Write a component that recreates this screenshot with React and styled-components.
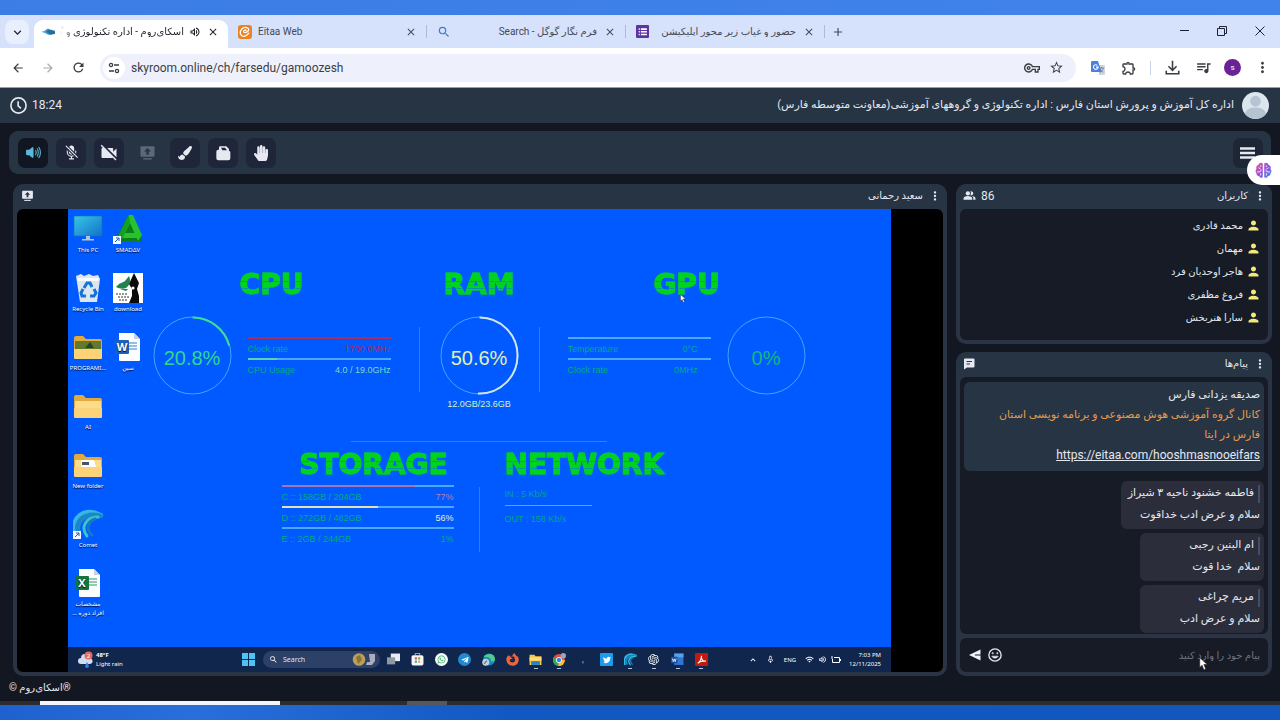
import styled, { createGlobalStyle, css } from "styled-components";
import {
  MdArrowBack,
  MdArrowForward,
  MdRefresh,
  MdClose,
  MdAdd,
  MdExpandMore,
  MdOutlineVpnKey,
  MdStarBorder,
  MdOutlineExtension,
  MdQueueMusic,
  MdMoreVert,
  MdVideocamOff,
  MdPeopleAlt,
  MdPerson,
  MdSearch,
  MdOutlineVolumeUp,
  MdWifi,
  MdMicNone,
  MdExpandLess,
} from "react-icons/md";
import { IoVolumeHigh, IoMicOff } from "react-icons/io5";
import {
  FaPaintBrush,
  FaHandPaper,
  FaWhatsapp,
  FaTwitter,
  FaTelegramPlane,
  FaFirefoxBrowser,
} from "react-icons/fa";
import { RiOpenaiFill } from "react-icons/ri";

const COLOR = {
  page: "#131722",
  panel: "#273444",
  edge: "#2b3444",
  inner: "#171b26",
  bubble: "#2c2d3b",
  text: "#e3e8f0",
  orange: "#e69a4c",
  yellow: "#f2ea78",
  wallpaper: "#005aff",
  green: "#00d21e",
  line: "#4fa8ff",
};

const FONT = {
  main: `Roboto, "DejaVu Sans", sans-serif`,
  desktop: `"Noto Sans", "DejaVu Sans", sans-serif`,
  widget: `"Liberation Sans", Arial, sans-serif`,
};

const GlobalStyle = createGlobalStyle`
  * {
    box-sizing: border-box;
  }

  body {
    margin: 0;
    background: ${COLOR.page};
    font-family: ${FONT.main};
    color: ${COLOR.text};
  }

  button {
    border: 0;
    padding: 0;
    background: none;
    color: inherit;
    font: inherit;
  }

  svg {
    display: block;
    flex: none;
  }
`;

const Page = styled.div`
  position: relative;
  display: flex;
  flex-direction: column;
  min-height: 100vh;
`;

const TopStrip = styled.div`
  height: 15px;
  background: linear-gradient(90deg, #3b7de4, #4083ea);
`;

const BottomStrip = styled.div`
  height: 15px;
  background: linear-gradient(90deg, #1f62cf, #2a6edb 15%, #1357c2 40%, #1256be);
`;

/* browser window */

const TabBar = styled.div`
  display: flex;
  align-items: flex-end;
  height: 33px;
  padding-left: 5px;
  background: #d6e1fb;
  color: #454a57;
`;

const TabListButton = styled.button`
  display: grid;
  place-items: center;
  width: 24px;
  height: 24px;
  margin: 0 5px 4px 0;
  border-radius: 8px;
  background: #e9effd;
  color: #1f2329;
`;

const Tab = styled.div`
  display: flex;
  align-items: center;
  gap: 6px;
  width: 198px;
  height: 28px;
  padding: 0 8px 5px 10px;
  border-radius: 9px 9px 0 0;
  font-size: 10px;

  ${(props) =>
    props.$active &&
    css`
      width: 194px;
      background: #fff;
      color: #1f2329;
      padding: 0 8px 5px 7px;
      gap: 5px;
    `}
`;

const TabTitle = styled.span`
  flex: 1;
  min-width: 0;
  overflow: hidden;
  white-space: nowrap;
  ${(props) =>
    props.$fade && "mask-image: linear-gradient(90deg, transparent, #000 14px);"}
`;

const TabDivider = styled.span`
  width: 1px;
  height: 13px;
  margin-bottom: 5px;
  background: #a9bbe4;
`;

const IconButton = styled.button`
  display: grid;
  place-items: center;
  flex: none;
  width: ${(props) => props.$size ?? 20}px;
  height: ${(props) => props.$size ?? 20}px;
`;

const NewTabButton = styled(IconButton)`
  margin: 0 0 6px 3px;
`;

const WindowButtons = styled.div`
  display: flex;
  gap: 18px;
  margin: 0 10px 7px auto;
  color: #1c2233;
`;

const AddressRow = styled.div`
  display: flex;
  align-items: center;
  height: 40px;
  padding: 0 8px;
  border-bottom: 1px solid #9aa0a8;
  background: #fff;
  color: #3a3d42;
`;

const NavButtons = styled.div`
  display: flex;
  gap: 10px;
  margin-right: 12px;
`;

const AddressBox = styled.label`
  display: flex;
  align-items: center;
  flex: 1;
  gap: 6px;
  height: 28px;
  padding: 0 10px 0 3px;
  border-radius: 14px;
  background: #eef1fb;
`;

const SiteInfo = styled.span`
  display: grid;
  place-items: center;
  width: 22px;
  height: 22px;
  border-radius: 50%;
  background: #fff;
`;

const AddressInput = styled.input`
  flex: 1;
  min-width: 0;
  border: 0;
  padding: 0;
  background: none;
  color: #3b3e45;
  font: 12px ${FONT.main};
`;

const Extensions = styled.div`
  display: flex;
  align-items: center;
  gap: 11px;
  margin-left: 12px;
`;

const ExtensionDivider = styled.span`
  width: 1px;
  height: 14px;
  background: #c9d3ec;
`;

const Profile = styled.button`
  width: 17px;
  height: 17px;
  border-radius: 50%;
  background: #6b2394;
  color: #fff;
  font-size: 8px;
`;

/* room */

const Header = styled.header`
  display: flex;
  align-items: center;
  justify-content: space-between;
  height: 35px;
  padding: 0 11px 0 10px;
  background: ${COLOR.panel};
`;

const Inline = styled.div`
  display: flex;
  align-items: center;
  gap: ${(props) => props.$gap ?? 6}px;
`;

const Clock = styled.time`
  padding-bottom: 2px;
  font-size: 12px;
  line-height: 16px;
`;

const RoomTitle = styled.h1`
  margin: 0;
  padding-bottom: 2px;
  font-size: 11px;
  font-weight: 400;
`;

const Toolbar = styled.div`
  display: flex;
  align-items: center;
  gap: 8px;
  height: 43px;
  margin: 8px 9px 10px;
  padding: 0 8px 0 9px;
  border-radius: 9px;
  background: ${COLOR.panel};
`;

const ToolButton = styled.button`
  display: grid;
  place-items: center;
  width: 30px;
  height: 30px;
  border-radius: 7px;
  background: ${(props) => (props.$active ? "#101722" : "#20263a")};
  color: ${(props) => (props.$active ? "#5cb8d8" : "#e6e9f2")};

  &:disabled {
    background: none;
    color: #5c6877;
  }

  &:last-child {
    margin-left: auto;
    background: #1e2635;
  }
`;

const Room = styled.main`
  display: flex;
  flex: 1;
  gap: 9px;
  padding: 0 8px 0 13px;
`;

const Panel = styled.section`
  display: flex;
  flex-direction: column;
  flex: ${(props) => (props.$grow ? "1" : "none")};
  min-width: 0;
  padding: 0 4px 4px;
  border-radius: 10px;
  background: linear-gradient(${COLOR.panel} 25px, ${COLOR.edge} 40px);
`;

const PanelHeader = styled.div`
  display: flex;
  align-items: center;
  justify-content: space-between;
  height: 25px;
  padding: 0 0 2px 3px;
`;

const PanelTitle = styled.h2`
  margin: 0;
  padding-bottom: 1px;
  font-size: 10px;
  font-weight: 400;
`;

const Count = styled.span`
  font-size: 12px;
`;

const Sidebar = styled.aside`
  display: flex;
  flex-direction: column;
  gap: 8px;
  width: 316px;
`;

const UserList = styled.ul`
  min-height: 131px;
  margin: 0;
  padding: 5px 7px;
  border-radius: 6px;
  background: ${COLOR.inner};
  list-style: none;
`;

const User = styled.li`
  display: flex;
  align-items: center;
  gap: 3px;
  height: 23px;
  font-size: 10px;
  color: ${COLOR.text};

  & svg {
    color: ${COLOR.yellow};
  }
`;

const MessageList = styled.div`
  display: flex;
  flex-direction: column;
  flex: 1;
  gap: 4px;
  padding: 5px 4px 1px;
  border-radius: 6px;
  background: ${COLOR.inner};
`;

const Announcement = styled.article`
  margin-bottom: 6px;
  padding: 3px 4px 5px 24px;
  border-radius: 6px;
  background: ${COLOR.panel};
  font-size: 11px;
  line-height: 20px;

  & p {
    margin: 0;
  }

  & a {
    color: ${COLOR.text};
    font-size: 12px;
  }
`;

const OrangeText = styled.p`
  color: ${COLOR.orange};
`;

const Bubble = styled.article`
  align-self: flex-start;
  min-width: 124px;
  height: 48px;
  padding: 4px 4px 2px 7px;
  border-radius: 6px;
  background: ${COLOR.bubble};
  font-size: 11px;
  white-space: pre;
`;

const Sender = styled.div`
  height: 18px;
  padding-right: 4px;
  border-right: 2px solid #434d6c;
  line-height: 16px;
`;

const BubbleText = styled.div`
  line-height: 24px;
`;

const Composer = styled.form`
  position: relative;
  display: flex;
  align-items: center;
  gap: 6px;
  height: 34px;
  margin-top: 4px;
  padding: 0 8px;
  border-radius: 6px;
  background: ${COLOR.inner};
`;

const ComposerInput = styled.input`
  flex: 1;
  min-width: 0;
  border: 0;
  padding: 0;
  background: none;
  color: ${COLOR.text};
  font: 10px ${FONT.main};

  &::placeholder {
    color: #70747f;
    opacity: 1;
  }
`;

const Footer = styled.footer`
  height: 25px;
  padding: 4px 9px 0;
  font-size: 10px;
  line-height: 16px;
`;

const HostTaskbar = styled.div`
  display: grid;
  grid-template-columns: 40px 240px 127px 40px 1fr;
  height: 4px;
  background: #2e2c2c;
`;

const HostWindow = styled.span`
  grid-column: ${(props) => props.$column};
  background: ${(props) => props.$color};
`;

const Assistant = styled.button`
  position: absolute;
  top: 155px;
  right: 0;
  display: grid;
  place-items: center;
  width: 33px;
  height: 30px;
  border-radius: 15px 0 0 15px;
  background: #fff;
`;

const Pointer = styled.svg`
  position: absolute;
  ${(props) => props.$place}
`;

/* shared desktop */

const Stage = styled.div`
  display: flex;
  flex: 1;
  padding: 0 52px 0 51px;
  border-radius: 6px;
  background: #000;
`;

const Desktop = styled.div`
  display: flex;
  flex-direction: column;
  flex: 1;
  min-width: 0;
  background: ${COLOR.wallpaper};
`;

const DesktopBody = styled.div`
  display: flex;
  flex: 1;
  gap: 4px;
`;

const Shortcuts = styled.div`
  display: grid;
  grid-template-rows: repeat(7, 59px);
  grid-template-columns: 40px 40px;
  grid-auto-flow: column;
  padding-top: 5px;
`;

const Shortcut = styled.div`
  display: flex;
  flex-direction: column;
  align-items: center;
  gap: 2px;
  color: #fff;
  font: 6px/9px ${FONT.desktop};
  text-align: center;
  text-shadow: 0 1px 1px #001;
  white-space: pre;
`;

const Widgets = styled.div`
  display: flex;
  flex-direction: column;
  align-items: center;
  width: 654px;
  padding-top: 60px;
  font-family: ${FONT.widget};
`;

const WidgetRow = styled.div`
  display: flex;
  gap: ${(props) => props.$gap}px;
`;

const Widget = styled.section`
  position: relative;
  display: flex;
  flex-direction: column;
  align-items: ${(props) => props.$align ?? "center"};
  width: ${(props) => props.$width}px;
`;

const WidgetTitle = styled.h3`
  margin: 0;
  padding-left: ${(props) => props.$indent ?? 0}px;
  font: bold 28px/32px "DejaVu Sans", sans-serif;
  color: transparent;
  -webkit-text-stroke: 1px rgba(0, 210, 30, 0.7);
  background: linear-gradient(
    ${COLOR.green} 12px,
    #0594a0 12px 13px,
    ${COLOR.green} 13px 19px,
    #0594a0 19px 20px,
    ${COLOR.green} 20px
  );
  background-clip: text;
`;

const GaugeRow = styled.div`
  display: flex;
  align-items: center;
  gap: 16px;
  margin-top: 15px;
`;

const GaugeBox = styled.div`
  position: relative;
  display: grid;
  place-items: center;
  width: 79px;
  height: 79px;
  color: ${(props) => props.$color};
  font-size: 20px;
  line-height: 24px;

  & svg {
    position: absolute;
    inset: 0;
  }

  & span {
    padding-top: 5px;
  }
`;

const GaugeNote = styled.div`
  margin-top: 3px;
  color: #d9f0c0;
  font-size: 9px;
  line-height: 12px;
`;

const Stats = styled.div`
  display: flex;
  flex-direction: column;
  width: ${(props) => props.$width}px;
  padding-top: 4px;
`;

const Stat = styled.div`
  display: flex;
  justify-content: space-between;
  height: 21px;
  padding: 5px ${(props) => props.$inset ?? 0}px 0 0;
  border-top: 2px solid;
  border-image: linear-gradient(
      90deg,
      ${(props) => props.$bar ?? COLOR.line} ${(props) => props.$fill ?? 100}%,
      ${COLOR.line} 0
    )
    1;
  color: #00ab83;
  font-size: 9px;
  line-height: 11px;
`;

const StatValue = styled.span`
  color: ${(props) => props.$color ?? "inherit"};
`;

const Divider = styled.span`
  width: 1px;
  height: 65px;
  margin-top: ${(props) => props.$top}px;
  background: #2e7dff;
`;

const HorizontalDivider = styled.span`
  width: 256px;
  height: 1px;
  margin: 31px 0 7px;
  background: #2e7dff;
`;

const NetLine = styled.div`
  width: 87px;
  height: 24px;
  padding-top: 8px;
  border-top: ${(props) => (props.$rule ? `1px solid ${COLOR.line}` : 0)};
  color: #00a58d;
  font-size: 9px;
  line-height: 11px;
`;

const Taskbar = styled.div`
  display: flex;
  align-items: center;
  height: 25px;
  padding: 0 10px;
  background: #10264c;
  color: #fff;
  font: 6px/8px ${FONT.desktop};
`;

const Weather = styled.div`
  display: flex;
  align-items: center;
  gap: 3px;
  width: 164px;

  & div {
    line-height: 9px;
  }
`;

const SearchBox = styled.label`
  display: flex;
  align-items: center;
  gap: 5px;
  width: 117px;
  height: 17px;
  margin-left: 8px;
  padding: 0 4px 0 6px;
  border-radius: 9px;
  background: #2c4068;
`;

const SearchInput = styled.input`
  flex: 1;
  min-width: 0;
  border: 0;
  padding: 0;
  background: none;
  font: 7px ${FONT.desktop};

  &::placeholder {
    color: #dfe6f4;
    opacity: 1;
  }
`;

const TaskApps = styled.div`
  display: flex;
  width: 331px;
  margin-left: 2px;
`;

const TaskApp = styled.span`
  display: flex;
  flex: 1;
  flex-direction: column;
  align-items: center;
  gap: 2px;
  padding-top: 3px;

  &::after {
    content: "";
    width: 4px;
    height: 1px;
    background: ${(props) => (props.$open ? "#b8c6de" : "transparent")};
  }
`;

const Disc = styled.span`
  display: grid;
  place-items: center;
  width: 13px;
  height: 13px;
  border-radius: ${(props) => props.$radius ?? "50%"};
  background: ${(props) => props.$color};
  color: ${(props) => props.$ink ?? "#fff"};
`;

const Tray = styled.div`
  display: flex;
  align-items: center;
  gap: 4px;
  margin-left: auto;
  text-align: right;

  & time {
    margin-left: 4px;
    line-height: 9px;
  }
`;

const TrayGroup = styled.span`
  display: flex;
  align-items: center;
  gap: 8px;
  margin-right: 5px;
`;

/* drawings */

const ShareIcon = ({ size = 18, hole = COLOR.panel }) => (
  <svg width={size} height={size} viewBox="0 0 24 24" fill="currentColor">
    <path d="M3.500 3h17A1.500 1.500 0 0 1 22 4.500v12a1.500 1.500 0 0 1-1.500 1.500h-17A1.500 1.500 0 0 1 2 16.500v-12A1.500 1.500 0 0 1 3.500 3z" />
    <path d="M12 5.500l5 5h-3.300V15h-3.400v-4.500H7z" fill={hole} />
    <path d="M6 20h12v2H6z" />
  </svg>
);

const FilesIcon = () => (
  <svg width="16" height="16" viewBox="0 0 24 24" fill="currentColor">
    <path d="M2 10a3 3 0 0 1 3-3h1V4a2 2 0 0 1 2-2h9l4 4v3a2 2 0 0 1 2 2v9a3 3 0 0 1-3 3H5a3 3 0 0 1-3-3z" />
    <path d="M9 4h6l3 4h-7z" fill="#20263a" />
  </svg>
);

const MenuIcon = () => (
  <svg width="16" height="14" viewBox="0 0 16 14" stroke="currentColor" strokeWidth="2.500">
    <path d="M0 2.500h15M0 7h15M0 11.500h15" />
  </svg>
);

const ClockIcon = () => (
  <svg
    width="17"
    height="17"
    viewBox="0 0 24 24"
    fill="none"
    stroke="currentColor"
    strokeWidth="2.300"
  >
    <circle cx="12" cy="12" r="10.700" />
    <path d="M11.500 6v6.500l4 3.500" />
  </svg>
);

const SkyroomIcon = () => (
  <svg width="14" height="12" viewBox="0 0 24 20">
    <path d="M0 10c5-1 7-2 10-5 3-1 5-1 6 1 3 0 6 1 8 2v5c-4-1-6 3-10 2-3 0-5-4-14-5z" fill="#4a9ed2" />
    <path d="M9 9c4-4 8-3 15 0v4c-5 2-11 1-15-4z" fill="#2a6b98" />
  </svg>
);

const EitaaIcon = () => (
  <svg width="14" height="14" viewBox="0 0 24 24">
    <rect width="24" height="24" rx="5" fill="#e98324" />
    <path
      d="M4 15C3 8 9 3 15 4.500c5 1.500 4 6-1 8-4 1.500-6-1-3-3.500 1.500-1 3-.5 2.500.5M4.500 16c2 5 9 5 14-2"
      fill="none"
      stroke="#fff"
      strokeWidth="2.200"
      strokeLinecap="round"
    />
  </svg>
);

const FormsIcon = () => (
  <svg width="13" height="13" viewBox="0 0 24 24">
    <rect width="24" height="24" rx="2" fill="#5b35a0" />
    <path d="M5 6h2v3H5zM9 6h11v3H9zM5 11h2v3H5zM9 11h11v3H9zM5 16h2v3H5zM9 16h11v3H9z" fill="#fff" />
  </svg>
);

const TuneIcon = () => (
  <svg width="12" height="12" viewBox="0 0 24 24" fill="none" stroke="#3a3d42" strokeWidth="2.600">
    <circle cx="6" cy="6" r="3.200" />
    <circle cx="18" cy="18" r="3.200" />
    <path d="M12 6h10M2 18h10" />
  </svg>
);

const DownloadIcon = () => (
  <svg width="15" height="15" viewBox="0 0 24 24" fill="none" stroke="currentColor" strokeWidth="2.500">
    <path d="M12 1v15M5.500 10l6.500 6.500 6.500-6.500M2 17v5h20v-5" />
  </svg>
);

const TranslateIcon = () => (
  <svg width="14" height="14" viewBox="0 0 24 24">
    <path d="M11 7h11a2 2 0 0 1 2 2v13a2 2 0 0 1-2 2H14z" fill="#cfd5de" />
    <path d="M14 12h8M18 10v2m3 0c-1 4-3 6-6 8m1-6c1 3 3 4 5 5" stroke="#6c7f9b" strokeWidth="1.500" fill="none" />
    <path d="M2 0h10l6 19H2a2 2 0 0 1-2-2V2a2 2 0 0 1 2-2z" fill="#4c80dc" />
    <path d="M11 7.500a4 4 0 1 0 1.200 3H8.500" fill="none" stroke="#fff" strokeWidth="1.800" />
  </svg>
);

const Avatar = () => (
  <svg width="27" height="27" viewBox="0 0 28 28">
    <circle cx="14" cy="14" r="14" fill="#dbe6ee" />
    <circle cx="14" cy="9.500" r="5.500" fill="#b5c4d0" />
    <path d="M3 22.500C5 17 9 16 14 16s9 1 11 6.500A14 14 0 0 1 3 22.500z" fill="#b5c4d0" />
  </svg>
);

const BrainIcon = () => (
  <svg width="17" height="17" viewBox="0 0 24 24">
    <defs>
      <linearGradient id="brain" x1="0" x2="1" y1="0" y2="1">
        <stop offset="0" stopColor="#f0568f" />
        <stop offset=".5" stopColor="#9a52dc" />
        <stop offset="1" stopColor="#3b8ff0" />
      </linearGradient>
    </defs>
    <path
      d="M11 2C8 0 5 2 5 4 2 5 1 8 2 10c-2 2-1 5 0 6 0 3 2 4 4 4 1 3 4 3 5 1zM13 2c3-2 6 0 6 2 3 1 4 4 3 6 2 2 1 5 0 6 0 3-2 4-4 4-1 3-4 3-5 1z"
      fill="url(#brain)"
    />
    <path
      d="M5 8l3 2M3 14h4l2-3M8 5v2M8 16v3M19 8l-3 2M21 14h-4l-2-3M16 5v2M16 16v3"
      stroke="#fff"
      strokeWidth="1.200"
      fill="none"
    />
  </svg>
);

const ChatIcon = () => (
  <svg width="12" height="12" viewBox="0 0 24 24">
    <path d="M4 1h17a2 2 0 0 1 2 2v14a2 2 0 0 1-2 2H8l-6 4V3a2 2 0 0 1 2-2z" fill="#e6e9f2" />
    <path d="M7 7h11M7 12h7" stroke={COLOR.panel} strokeWidth="2" />
  </svg>
);

const SendIcon = () => (
  <svg width="12" height="12" viewBox="0 0 24 24">
    <path d="M0 12L23 1v22z" fill="#eef0f6" />
    <path d="M12 12h12" stroke={COLOR.inner} strokeWidth="2" />
  </svg>
);

const SmileIcon = () => (
  <svg width="14" height="14" viewBox="0 0 24 24" fill="none" stroke="#e6e9f2" strokeWidth="2.300">
    <circle cx="12" cy="12" r="10.500" />
    <path d="M6.500 14c2 4.500 9 4.500 11 0z" fill="#e6e9f2" strokeWidth="1" />
    <circle cx="8" cy="9" r=".6" />
    <circle cx="16" cy="9" r=".6" />
  </svg>
);

const PointerArrow = ({ place, size }) => (
  <Pointer $place={place} width={size} height={size * 1.5} viewBox="0 0 12 18">
    <path d="M1 1v13l3-3 2.500 6 2.500-1-2.500-6H11z" fill="#fff" stroke="#222" strokeWidth=".8" />
  </Pointer>
);

const ArrowBadge = () => (
  <g>
    <rect x="0" y="22" width="8" height="8" fill="#f4f8ff" />
    <path d="M2 28l4-4M3 24h3v3" fill="none" stroke="#1b62b8" strokeWidth="1" />
  </g>
);

const Art = ({ children }) => (
  <svg width="30" height="30" viewBox="0 0 30 30">
    {children}
  </svg>
);

const Folder = ({ children }) => (
  <Art>
    <path d="M1 6a2 2 0 0 1 2-2h7l3 3h14a2 2 0 0 1 2 2v15H1z" fill="#e0aa3c" />
    <path d="M2 10h26v14H2z" fill="#fbdc8c" />
    {children}
    <path d="M1 17h28v9a1 1 0 0 1-1 1H2a1 1 0 0 1-1-1z" fill="#fcd477" />
  </Art>
);

const PcArt = () => (
  <Art>
    <defs>
      <linearGradient id="screen" x1="0" x2="1" y1="0" y2="1">
        <stop offset="0" stopColor="#37c6e8" />
        <stop offset="1" stopColor="#1272c9" />
      </linearGradient>
    </defs>
    <rect x="1" y="2" width="28" height="20" rx="1" fill="url(#screen)" stroke="#1c6ea8" strokeWidth=".6" />
    <path d="M13 22h4v3h4v1.500H9V25h4z" fill="#b9c6d3" />
  </Art>
);

const SmadavArt = () => (
  <Art>
    <path d="M15 1L2 27h27L19 1z" fill="#0c7d1b" />
    <path d="M16 1h4l9 20-4 6-8-18-5 10h10l2 5H5z" fill="#25c32e" />
    <path d="M16 1L4 24l5 1 8-16z" fill="#159f23" />
    <ArrowBadge />
  </Art>
);

const RecycleArt = () => (
  <Art>
    <path d="M3 3l5-2 3 2 5-2 4 2 5-1 2 4-3 23H7z" fill="#dce6f2" />
    <path d="M4 5h22l-1 3H5z" fill="#f7faff" />
    <path
      d="M11 15l3-5h3l2 4M21 16l2 4-2 3h-4M13 23H9l-1-3 2-4"
      fill="none"
      stroke="#1673d4"
      strokeWidth="3"
    />
  </Art>
);

const DownloadArt = () => (
  <Art>
    <rect width="30" height="30" fill="#fff" />
    <path d="M3 14c3-4 6-4 9-6l4-5c2 5 1 9-3 12-3 1-6 1-10-1z" fill="#1f8350" />
    <path d="M7 16h8l-2 2z" fill="#1f8350" />
    <path d="M21 0l5 10-2 6 2 7v7H16l3-7v-7l-3-5z" fill="#0b0b0b" />
    <circle cx="20" cy="15" r="1.600" fill="#fff" />
    <path d="M3 21h12M5 24h11M6 27h8" stroke="#333" strokeWidth="1" strokeDasharray="2 1" />
  </Art>
);

const DocArt = ({ color, letter, side }) => (
  <Art>
    <path d="M6 1h15l6 6v21a1 1 0 0 1-1 1H7a1 1 0 0 1-1-1z" fill="#fbfdff" />
    <path d="M21 1l6 6h-6z" fill="#c6d2e0" />
    <path d="M16 11h8M16 14h8M16 17h8" stroke={side} strokeWidth="1.200" />
    <rect x="2" y="8" width="14" height="14" rx="1" fill={color} />
    <text x="9" y="19" textAnchor="middle" fill="#fff" fontSize="11" fontWeight="700" fontFamily="Open Sans">
      {letter}
    </text>
  </Art>
);

const CometSwirl = () => (
  <g fill="none" strokeLinecap="round">
    <path d="M2 26C-3 9 10-3 28 6" stroke="#35b6e6" strokeWidth="4" />
    <path d="M6 25C1 13 12 3 27 7" stroke="#1c86c8" strokeWidth="5" />
    <path d="M14 27C7 18 13 8 25 8" stroke="#36c5cf" strokeWidth="3" />
    <path d="M19 26c-6-5-5-13 3-16" stroke="#1a78c2" strokeWidth="3" />
  </g>
);

const CometArt = () => (
  <Art>
    <CometSwirl />
    <ArrowBadge />
  </Art>
);

const SmallSvg = ({ children, box = 24 }) => (
  <svg width="13" height="13" viewBox={`0 0 ${box} ${box}`}>
    {children}
  </svg>
);

function Gauge({ value, label, color, arc }) {
  const length = 2 * Math.PI * 38;

  return (
    <GaugeBox $color={color}>
      <svg width="79" height="79" viewBox="0 0 79 79" fill="none">
        <circle cx="39.500" cy="39.500" r="38.500" stroke="#45a3ff" />
        {value > 0 && (
          <circle
            cx="39.500"
            cy="39.500"
            r="38"
            stroke={arc}
            strokeWidth="2"
            strokeDasharray={`${(length * value) / 100} ${length}`}
            transform="rotate(-90 39.500 39.500)"
          />
        )}
      </svg>
      <span>{label}</span>
    </GaugeBox>
  );
}

const TABS = [
  { title: "Eitaa Web", icon: <EitaaIcon />, dir: "ltr" },
  {
    title: "فرم نگار گوگل - Search",
    icon: <MdSearch size={14} color="#4a78c8" />,
    dir: "rtl",
  },
  {
    title: "حضور و غیاب زیر محور اپلیکیشن",
    icon: <FormsIcon />,
    dir: "rtl",
  },
];

const USERS = ["محمد قادری", "مهمان", "هاجر اوحدیان فرد", "فروغ مظفری", "سارا هنربخش"];

const MESSAGES = [
  { sender: "فاطمه خشنود ناحیه ۳ شیراز", text: "سلام و عرض ادب خداقوت" },
  { sender: "ام البنین رجبی", text: "سلام  خدا قوت" },
  { sender: "مریم چراغی", text: "سلام و عرض ادب" },
];

const SHORTCUTS = [
  { name: "This PC", art: <PcArt /> },
  { name: "Recycle Bin", art: <RecycleArt /> },
  {
    name: "PROGRAMI...",
    art: (
      <Folder>
        <path d="M2 9h26v8H2z" fill="#63792d" />
        <path d="M12 16l5-6 4 6z" fill="#2d451d" />
      </Folder>
    ),
  },
  { name: "AI", art: <Folder /> },
  {
    name: "New folder",
    art: (
      <Folder>
        <path d="M8 10h13l2 7H8z" fill="#fff" />
        <path d="M9 12h7v3H9z" fill="#44546a" />
      </Folder>
    ),
  },
  { name: "Comet", art: <CometArt /> },
  {
    name: "مشخصات\nافراد دوره ...",
    art: <DocArt color="#14743f" letter="X" side="#2b9a60" />,
    dir: "rtl",
  },
  { name: "SMADΔV", art: <SmadavArt /> },
  { name: "download", art: <DownloadArt /> },
  { name: "سین", art: <DocArt color="#1e5fb8" letter="W" side="#3b7bd0" /> },
];

function Browser() {
  return (
    <>
      <TabBar>
        <TabListButton aria-label="Search tabs">
          <MdExpandMore size={15} />
        </TabListButton>
        <Tab $active>
          <SkyroomIcon />
          <TabTitle dir="rtl" $fade>
            اسکای‌روم - اداره تکنولوژی و گ
          </TabTitle>
          <MdOutlineVolumeUp size={12} />
          <IconButton $size={14} aria-label="Close tab">
            <MdClose size={12} />
          </IconButton>
        </Tab>
        {TABS.map((tab) => (
          <Inline key={tab.title} $gap={0}>
            <Tab>
              {tab.icon}
              <TabTitle dir={tab.dir}>{tab.title}</TabTitle>
              <IconButton $size={14} aria-label="Close tab">
                <MdClose size={12} />
              </IconButton>
            </Tab>
            <TabDivider />
          </Inline>
        ))}
        <NewTabButton aria-label="New tab">
          <MdAdd size={14} />
        </NewTabButton>
        <WindowButtons>
          <IconButton aria-label="Minimize">
            <svg width="10" height="10" viewBox="0 0 10 10" stroke="currentColor">
              <path d="M1 4.500h9" />
            </svg>
          </IconButton>
          <IconButton aria-label="Restore">
            <svg width="10" height="10" viewBox="0 0 10 10" fill="none" stroke="currentColor">
              <path d="M.5 2.500h7v7h-7zM2.500 2V.5h7v7H8" />
            </svg>
          </IconButton>
          <IconButton aria-label="Close">
            <svg width="10" height="10" viewBox="0 0 10 10" stroke="currentColor">
              <path d="M.5.5l9 9M9.500.5l-9 9" />
            </svg>
          </IconButton>
        </WindowButtons>
      </TabBar>
      <AddressRow>
        <NavButtons>
          <IconButton aria-label="Back">
            <MdArrowBack size={14} />
          </IconButton>
          <IconButton aria-label="Forward">
            <MdArrowForward size={14} color="#a7aab0" />
          </IconButton>
          <IconButton aria-label="Reload">
            <MdRefresh size={15} />
          </IconButton>
        </NavButtons>
        <AddressBox>
          <SiteInfo>
            <TuneIcon />
          </SiteInfo>
          <AddressInput aria-label="Address" defaultValue="skyroom.online/ch/farsedu/gamoozesh" />
          <MdOutlineVpnKey size={16} />
          <IconButton aria-label="Bookmark">
            <MdStarBorder size={15} />
          </IconButton>
        </AddressBox>
        <Extensions>
          <IconButton aria-label="Translate">
            <TranslateIcon />
          </IconButton>
          <IconButton aria-label="Extensions">
            <MdOutlineExtension size={16} />
          </IconButton>
          <ExtensionDivider />
          <IconButton aria-label="Downloads">
            <DownloadIcon />
          </IconButton>
          <IconButton aria-label="Media">
            <MdQueueMusic size={17} />
          </IconButton>
          <Profile>s</Profile>
          <IconButton aria-label="Menu">
            <MdMoreVert size={17} />
          </IconButton>
        </Extensions>
      </AddressRow>
    </>
  );
}

function SystemWidgets() {
  return (
    <Widgets>
      <WidgetRow $gap={28}>
        <Widget $width={238}>
          <WidgetTitle>CPU</WidgetTitle>
          <GaugeRow>
            <Gauge value={20.8} label="20.8%" color="#2fd98c" arc="#3be08a" />
            <Stats $width={143}>
              <Stat $bar="#a8305f">
                <span>Clock rate</span>
                <StatValue $color="#a52f6c">1700.0MHz</StatValue>
              </Stat>
              <Stat $bar="#5fd0b0" $fill={21}>
                <span>CPU Usage</span>
                <StatValue $color="#7fd8c8">4.0 / 19.0GHz</StatValue>
              </Stat>
            </Stats>
          </GaugeRow>
        </Widget>
        <WidgetRow $gap={20}>
          <Divider $top={58} />
          <Widget $width={79}>
            <WidgetTitle>RAM</WidgetTitle>
            <GaugeRow>
              <Gauge value={50.6} label="50.6%" color="#e2efb4" arc="#cfe6ee" />
            </GaugeRow>
            <GaugeNote>12.0GB/23.6GB</GaugeNote>
          </Widget>
          <Divider $top={58} />
        </WidgetRow>
        <Widget $width={238}>
          <WidgetTitle>GPU</WidgetTitle>
          <PointerArrow size={6} place="top: 25px; left: 112px;" />
          <GaugeRow>
            <Stats $width={143}>
              <Stat $inset={13}>
                <span>Temperature</span>
                <span>0°C</span>
              </Stat>
              <Stat $inset={13}>
                <span>Clock rate</span>
                <span>0MHz</span>
              </Stat>
            </Stats>
            <Gauge value={0} label="0%" color="#12b886" />
          </GaugeRow>
        </Widget>
      </WidgetRow>
      <HorizontalDivider />
      <WidgetRow $gap={25}>
        <Widget $width={172}>
          <WidgetTitle $indent={12}>STORAGE</WidgetTitle>
          <Stats $width={172}>
            <Stat $bar="#a077b8" $fill={77}>
              <span>C :: 158GB / 204GB</span>
              <StatValue $color="#b57fae">77%</StatValue>
            </Stat>
            <Stat $bar="#dfe0b4" $fill={56}>
              <span>D :: 272GB / 482GB</span>
              <StatValue $color="#eceac8">56%</StatValue>
            </Stat>
            <Stat>
              <span>E :: 2GB / 244GB</span>
              <span>1%</span>
            </Stat>
          </Stats>
        </Widget>
        <Divider $top={38} />
        <Widget $width={172} $align="flex-start">
          <WidgetTitle>NETWORK</WidgetTitle>
          <NetLine>IN : 5 Kb/s</NetLine>
          <NetLine $rule>OUT : 158 Kb/s</NetLine>
        </Widget>
      </WidgetRow>
    </Widgets>
  );
}

function DesktopTaskbar() {
  return (
    <Taskbar>
      <Weather>
        <svg width="15" height="18" viewBox="0 0 15 18">
          <path d="M3 13a3 3 0 0 1 0-6 4 4 0 0 1 8 0 3 3 0 0 1 1 6z" fill="#cfdcf3" />
          <path d="M9 11l-2 4a2 2 0 0 0 4 0z" fill="#2f7fe0" />
          <circle cx="10.500" cy="4.500" r="4" fill="#e46a66" />
          <text x="10.500" y="7" fontSize="6" textAnchor="middle" fill="#fff">
            2
          </text>
        </svg>
        <div>
          <b>48°F</b>
          <br />
          Light rain
        </div>
      </Weather>
      <svg width="13" height="13" viewBox="0 0 13 13">
        <path d="M0 0h6v6H0zM7 0h6v6H7zM0 7h6v6H0zM7 7h6v6H7z" fill="#4cc2f5" />
      </svg>
      <SearchBox>
        <MdSearch size={9} />
        <SearchInput placeholder="Search" />
        <svg width="24" height="13" viewBox="0 0 24 13">
          <circle cx="7" cy="6.500" r="6.300" fill="#b8a05a" />
          <path d="M4 4l4-2 2 5-4 4z" fill="#8a7434" />
          <path d="M17 1h6v7l-3 4h-6l1-3h3z" fill="#a9adbd" />
        </svg>
      </SearchBox>
      <TaskApps>
        <TaskApp>
          <SmallSvg>
            <path d="M7 1h17v14H7z" fill="#e8edf3" />
            <path d="M0 8h15v13H0z" fill="#8f99a3" />
          </SmallSvg>
        </TaskApp>
        <TaskApp>
          <SmallSvg>
            <path d="M8 4V1h8v3" fill="none" stroke="#5eb0e8" strokeWidth="2" />
            <rect x="1" y="4" width="22" height="19" rx="3" fill="#f4f6f8" />
            <path d="M7 8h4v4H7z" fill="#e0562f" />
            <path d="M13 8h4v4h-4z" fill="#7cae35" />
            <path d="M7 14h4v4H7z" fill="#3a9be0" />
            <path d="M13 14h4v4h-4z" fill="#eab62d" />
          </SmallSvg>
        </TaskApp>
        <TaskApp>
          <Disc $color="#f6fff8" $ink="#24a85a">
            <FaWhatsapp size={9} />
          </Disc>
        </TaskApp>
        <TaskApp>
          <Disc $color="#2089cf">
            <FaTelegramPlane size={8} />
          </Disc>
        </TaskApp>
        <TaskApp>
          <SmallSvg>
            <circle cx="13" cy="12" r="11" fill="#1787c4" />
            <path d="M3 8C8-1 24 0 24 12c0 4-7 5-8 2 1-5-8-8-13-6z" fill="#4fcb8c" />
            <circle cx="7" cy="17" r="6.500" fill="#c3d0dc" />
            <path d="M4 20l5-6" stroke="#57718b" strokeWidth="2" />
          </SmallSvg>
        </TaskApp>
        <TaskApp>
          <FaFirefoxBrowser size={13} color="#f0643c" />
        </TaskApp>
        <TaskApp $open>
          <SmallSvg>
            <path d="M1 3h9l2 3h11v16H1z" fill="#f6c644" />
            <path d="M4 15h16v7H4z" fill="#2a7fc9" />
            <path d="M1 8h22v6H1z" fill="#ffdc72" />
          </SmallSvg>
        </TaskApp>
        <TaskApp $open>
          <SmallSvg>
            <circle cx="11" cy="13" r="11" fill="#e84b3c" />
            <path d="M11 13L1 8a11 11 0 0 0 9 16z" fill="#34a853" />
            <path d="M11 13h11a11 11 0 0 1-12 11z" fill="#fbc02d" />
            <circle cx="11" cy="13" r="5" fill="#3c7ee8" stroke="#fff" strokeWidth="1.600" />
            <circle cx="19" cy="5" r="5" fill="#8fa6cf" />
          </SmallSvg>
        </TaskApp>
        <TaskApp>
          <SmallSvg>
            <path d="M10 15h5l-2 6z" fill="#5f7191" />
          </SmallSvg>
        </TaskApp>
        <TaskApp>
          <Disc $color="#1d9bea" $radius="1px">
            <FaTwitter size={8} />
          </Disc>
        </TaskApp>
        <TaskApp $open>
          <SmallSvg box={30}>
            <CometSwirl />
          </SmallSvg>
        </TaskApp>
        <TaskApp $open>
          <RiOpenaiFill size={13} />
        </TaskApp>
        <TaskApp $open>
          <SmallSvg>
            <path d="M6 1h17v21H6z" fill="#2f78d4" />
            <path d="M6 1h17v7H6z" fill="#53a3ee" />
            <rect y="7" width="12" height="12" rx="1" fill="#1b4fa0" />
            <path d="M2.500 10l1.700 6L6 11l1.800 5 1.700-6" fill="none" stroke="#fff" strokeWidth="1.400" />
          </SmallSvg>
        </TaskApp>
        <TaskApp $open>
          <SmallSvg>
            <rect width="24" height="24" rx="2" fill="#c3190f" />
            <path
              d="M5 19c3-1 7-7 7-14M12 9c1 5 4 7 8 6-5-1-10 0-15 4"
              fill="none"
              stroke="#fff"
              strokeWidth="2"
            />
          </SmallSvg>
        </TaskApp>
      </TaskApps>
      <Tray>
        <TrayGroup>
          <MdExpandLess size={10} />
          <MdMicNone size={9} />
        </TrayGroup>
        <TrayGroup>ENG</TrayGroup>
        <MdWifi size={9} />
        <MdOutlineVolumeUp size={9} />
        <svg width="10" height="8" viewBox="0 0 10 8" fill="none" stroke="currentColor">
          <path d="M3 1.500h5.500v5h-7V3M9.500 3v2M1 0v3" />
        </svg>
        <time>
          7:03 PM
          <br />
          12/11/2025
        </time>
      </Tray>
    </Taskbar>
  );
}

function App() {
  return (
    <Page>
      <GlobalStyle />
      <TopStrip />
      <Browser />
      <Header>
        <Inline $gap={5}>
          <ClockIcon />
          <Clock>18:24</Clock>
        </Inline>
        <Inline $gap={8}>
          <RoomTitle dir="rtl">
            اداره کل آموزش و پرورش استان فارس : اداره تکنولوژی و گروههای آموزشی(معاونت متوسطه فارس)
          </RoomTitle>
          <Avatar />
        </Inline>
      </Header>
      <Toolbar>
        <ToolButton $active aria-label="Speaker">
          <IoVolumeHigh size={17} />
        </ToolButton>
        <ToolButton aria-label="Microphone">
          <IoMicOff size={17} />
        </ToolButton>
        <ToolButton aria-label="Camera">
          <MdVideocamOff size={20} />
        </ToolButton>
        <ToolButton aria-label="Share screen" disabled>
          <ShareIcon size={17} />
        </ToolButton>
        <ToolButton aria-label="Whiteboard">
          <FaPaintBrush size={14} />
        </ToolButton>
        <ToolButton aria-label="Files">
          <FilesIcon />
        </ToolButton>
        <ToolButton aria-label="Raise hand">
          <FaHandPaper size={16} />
        </ToolButton>
        <ToolButton aria-label="Menu">
          <MenuIcon />
        </ToolButton>
      </Toolbar>

      <Room>
        <Panel $grow>
          <PanelHeader>
            <IconButton $size={14} aria-label="Shared screen">
              <ShareIcon size={13} />
            </IconButton>
            <Inline $gap={4}>
              <PanelTitle dir="rtl">سعید رحمانی</PanelTitle>
              <IconButton $size={16} aria-label="Options">
                <MdMoreVert size={14} />
              </IconButton>
            </Inline>
          </PanelHeader>
          <Stage>
            <Desktop>
              <DesktopBody>
                <Shortcuts>
                  {SHORTCUTS.map((item) => (
                    <Shortcut key={item.name} dir={item.dir}>
                      {item.art}
                      {item.name}
                    </Shortcut>
                  ))}
                </Shortcuts>
                <SystemWidgets />
              </DesktopBody>
              <DesktopTaskbar />
            </Desktop>
          </Stage>
        </Panel>

        <Sidebar>
          <Panel>
            <PanelHeader>
              <Inline $gap={5}>
                <MdPeopleAlt size={13} />
                <Count>86</Count>
              </Inline>
              <Inline $gap={4}>
                <PanelTitle dir="rtl">کاربران</PanelTitle>
                <IconButton $size={16} aria-label="Options">
                  <MdMoreVert size={14} />
                </IconButton>
              </Inline>
            </PanelHeader>
            <UserList dir="rtl">
              {USERS.map((name) => (
                <User key={name}>
                  <MdPerson size={15} />
                  {name}
                </User>
              ))}
            </UserList>
          </Panel>

          <Panel $grow>
            <PanelHeader>
              <ChatIcon />
              <Inline $gap={4}>
                <PanelTitle dir="rtl">پیام‌ها</PanelTitle>
                <IconButton $size={16} aria-label="Options">
                  <MdMoreVert size={14} />
                </IconButton>
              </Inline>
            </PanelHeader>
            <MessageList dir="rtl">
              <Announcement>
                <p>صدیقه یزدانی فارس</p>
                <OrangeText>کانال گروه آموزشی هوش مصنوعی و برنامه نویسی استان فارس در ایتا</OrangeText>
                <a href="https://eitaa.com/hooshmasnooeifars">https://eitaa.com/hooshmasnooeifars</a>
              </Announcement>
              {MESSAGES.map((message) => (
                <Bubble key={message.sender}>
                  <Sender>{message.sender}</Sender>
                  <BubbleText>{message.text}</BubbleText>
                </Bubble>
              ))}
            </MessageList>
            <Composer dir="rtl">
              <ComposerInput aria-label="پیام" placeholder="پیام خود را وارد کنید" />
              <IconButton type="button" $size={14} aria-label="Emoji">
                <SmileIcon />
              </IconButton>
              <IconButton type="button" $size={14} aria-label="Send">
                <SendIcon />
              </IconButton>
              <PointerArrow size={9} place="top: 19px; right: 60px;" />
            </Composer>
          </Panel>
        </Sidebar>
      </Room>

      <Footer>
        <span dir="rtl">®اسکای‌روم ©</span>
      </Footer>
      <HostTaskbar>
        <HostWindow $column={2} $color="#f3f5f8" />
        <HostWindow $column={4} $color="#5a5758" />
      </HostTaskbar>
      <BottomStrip />
      <Assistant aria-label="Assistant">
        <BrainIcon />
      </Assistant>
    </Page>
  );
}

export default App;
